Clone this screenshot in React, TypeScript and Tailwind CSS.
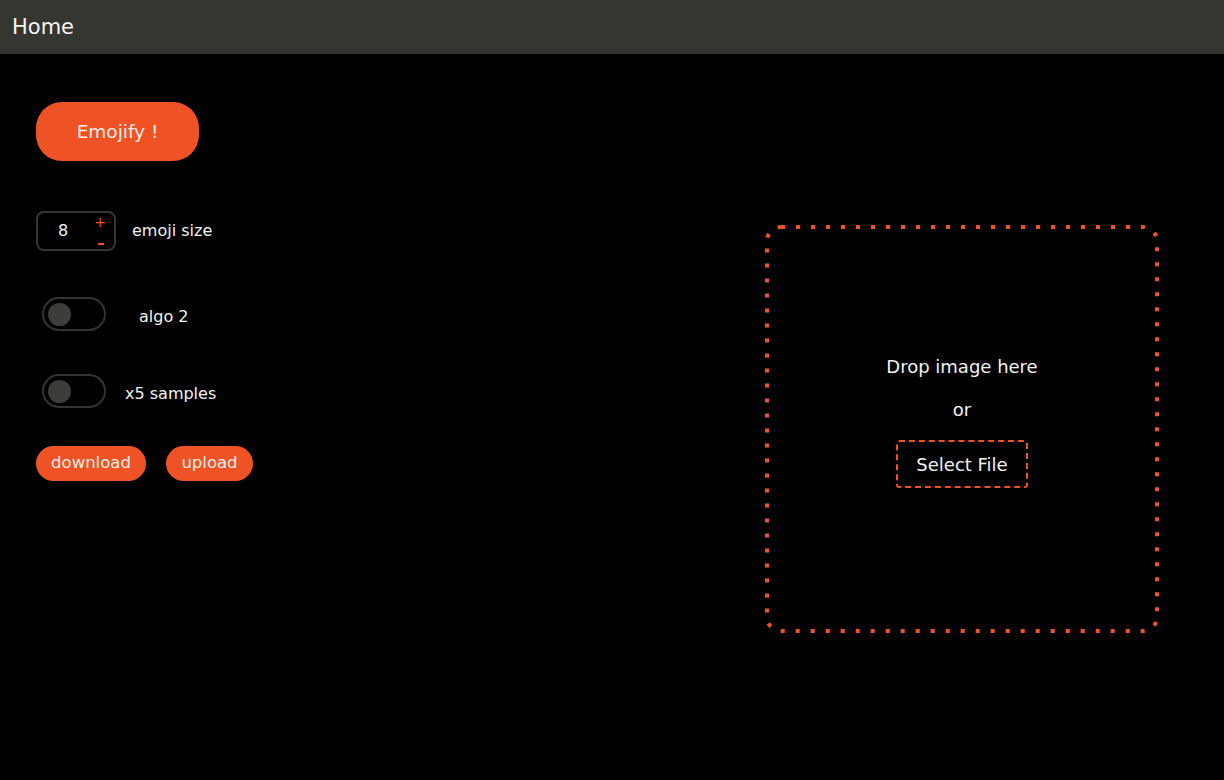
import React from "react";

const font = { fontFamily: '"DejaVu Sans", "Noto Sans", sans-serif' };

function Toggle() {
  return (
    <div className="flex h-[34px] w-[64px] items-center rounded-full border-2 border-[#333331] px-[4px]">
      <div className="h-[23px] w-[23px] rounded-full bg-[#3d3d3a]" />
    </div>
  );
}

export default function App() {
  return (
    <div className="min-h-[780px] w-full bg-black text-[#f2f2ee]" style={font}>
      <header className="flex h-[54px] items-center bg-[#363631] pl-[12px] pt-[2px]">
        <span className="text-[21px] text-[#f4f4f0]">Home</span>
      </header>
      <main className="flex items-start justify-between pl-[36px] pr-[65px]">
        <div className="flex flex-col pt-[48px]">
          <button className="flex h-[59px] w-[163px] items-center justify-center rounded-[26px] bg-[#ef5224] text-[18.5px] text-[#fbeee8]">
            Emojify !
          </button>
          <div className="mt-[50px] flex items-center">
            <div className="relative flex h-[40px] w-[80px] items-center rounded-[8px] border-2 border-[#343432] pl-[20px]">
              <span className="text-[16px]">8</span>
              <span className="absolute right-[8px] top-[0px] text-[14px] leading-[18px] text-[#ef5224]">+</span>
              <span className="absolute right-[10px] bottom-[4px] h-[2px] w-[6px] bg-[#ef5224]" />
            </div>
            <span className="ml-[16px] text-[16px]">emoji size</span>
          </div>
          <div className="mt-[46px] flex items-center pl-[6px]">
            <Toggle />
            <span className="ml-[33px] mt-[5px] text-[16px]">algo 2</span>
          </div>
          <div className="mt-[43px] flex items-center pl-[6px]">
            <Toggle />
            <span className="ml-[19px] mt-[5px] text-[16px]">x5 samples</span>
          </div>
          <div className="mt-[38px] flex items-center gap-[20px]">
            <button className="flex h-[35px] w-[110px] items-center justify-center rounded-full bg-[#ef5224] text-[16.5px] text-[#fbeee8]">
              download
            </button>
            <button className="flex h-[35px] w-[87px] items-center justify-center rounded-full bg-[#ef5224] text-[16.5px] text-[#fbeee8]">
              upload
            </button>
          </div>
        </div>
        <div className="relative mt-[171px] flex h-[408px] w-[394px] flex-col items-center justify-center pb-[14px]">
          <svg className="pointer-events-none absolute inset-0" width="394" height="408">
            <rect
              x="2"
              y="2"
              width="390"
              height="404"
              rx="14"
              ry="14"
              fill="none"
              stroke="#ef5224"
              strokeWidth="4"
              strokeDasharray="4 11"
            />
          </svg>
          <span className="text-[18px] leading-[21px]">Drop image here</span>
          <span className="mt-[22px] text-[18px] leading-[21px]">or</span>
          <div className="mt-[20px] flex h-[48px] w-[132px] items-center justify-center rounded-[3px] border-2 border-dashed border-[#ef5224]">
            <span className="text-[18px]">Select File</span>
          </div>
        </div>
      </main>
    </div>
  );
}
